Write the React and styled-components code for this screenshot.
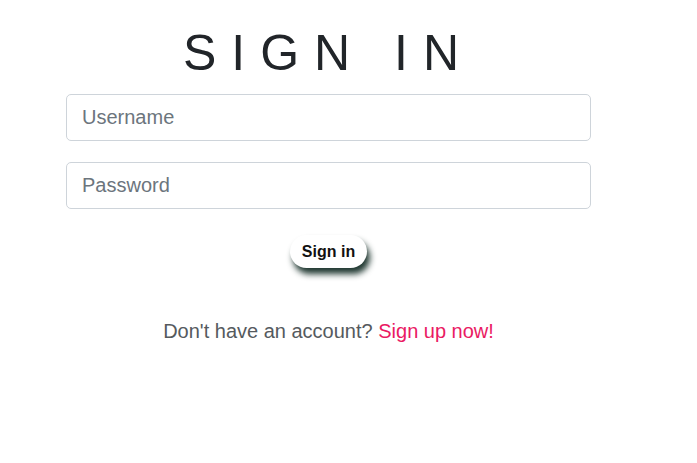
import React from "react";
import styled, { createGlobalStyle } from "styled-components";

const Global = createGlobalStyle`
  html, body { margin: 0; padding: 0; background: #fff; }
  body { font-family: "Liberation Sans", Arial, sans-serif; color: #212529; }
`;

const Page = styled.main`
  padding: 23px 0 0 66px;
`;

const Form = styled.form`
  width: 525px;
  display: flex;
  flex-direction: column;
  align-items: stretch;
`;

const Title = styled.h1`
  margin: 0 0 11px;
  font-family: "Liberation Sans", Arial, sans-serif;
  font-weight: 400;
  font-size: 50px;
  line-height: 60px;
  letter-spacing: 15px;
  text-align: center;
  color: #212529;
`;

const Input = styled.input`
  box-sizing: border-box;
  height: 47px;
  margin-bottom: ${(p) => p.$gap}px;
  padding: 0 15px;
  font-family: "Liberation Sans", Arial, sans-serif;
  font-size: 20px;
  color: #495057;
  border: 1px solid #ced4da;
  border-radius: 5px;
  background: #fff;
  outline: none;
  &::placeholder { color: #6c757d; opacity: 1; }
`;

const Button = styled.button`
  align-self: center;
  height: 33px;
  padding: 0 12px;
  border: none;
  border-radius: 17px;
  background: #fff;
  font-family: "Liberation Sans", Arial, sans-serif;
  font-weight: 700;
  font-size: 16px;
  color: #111;
  box-shadow: 3px 6px 6px rgba(20, 45, 38, 0.95);
  cursor: pointer;
`;

const Footer = styled.p`
  margin: 48px 0 0;
  text-align: center;
  font-size: 20px;
  line-height: 30px;
  color: #555a5e;
`;

const Link = styled.a`
  color: #ea1a63;
  text-decoration: none;
`;

export default function App() {
  return (
    <>
      <Global />
      <Page>
        <Form onSubmit={(e) => e.preventDefault()}>
          <Title>SIGN IN</Title>
          <Input $gap={21} placeholder="Username" />
          <Input $gap={26} type="password" placeholder="Password" />
          <Button type="submit">Sign in</Button>
          <Footer>
            Don't have an account? <Link href="#">Sign up now!</Link>
          </Footer>
        </Form>
      </Page>
    </>
  );
}
